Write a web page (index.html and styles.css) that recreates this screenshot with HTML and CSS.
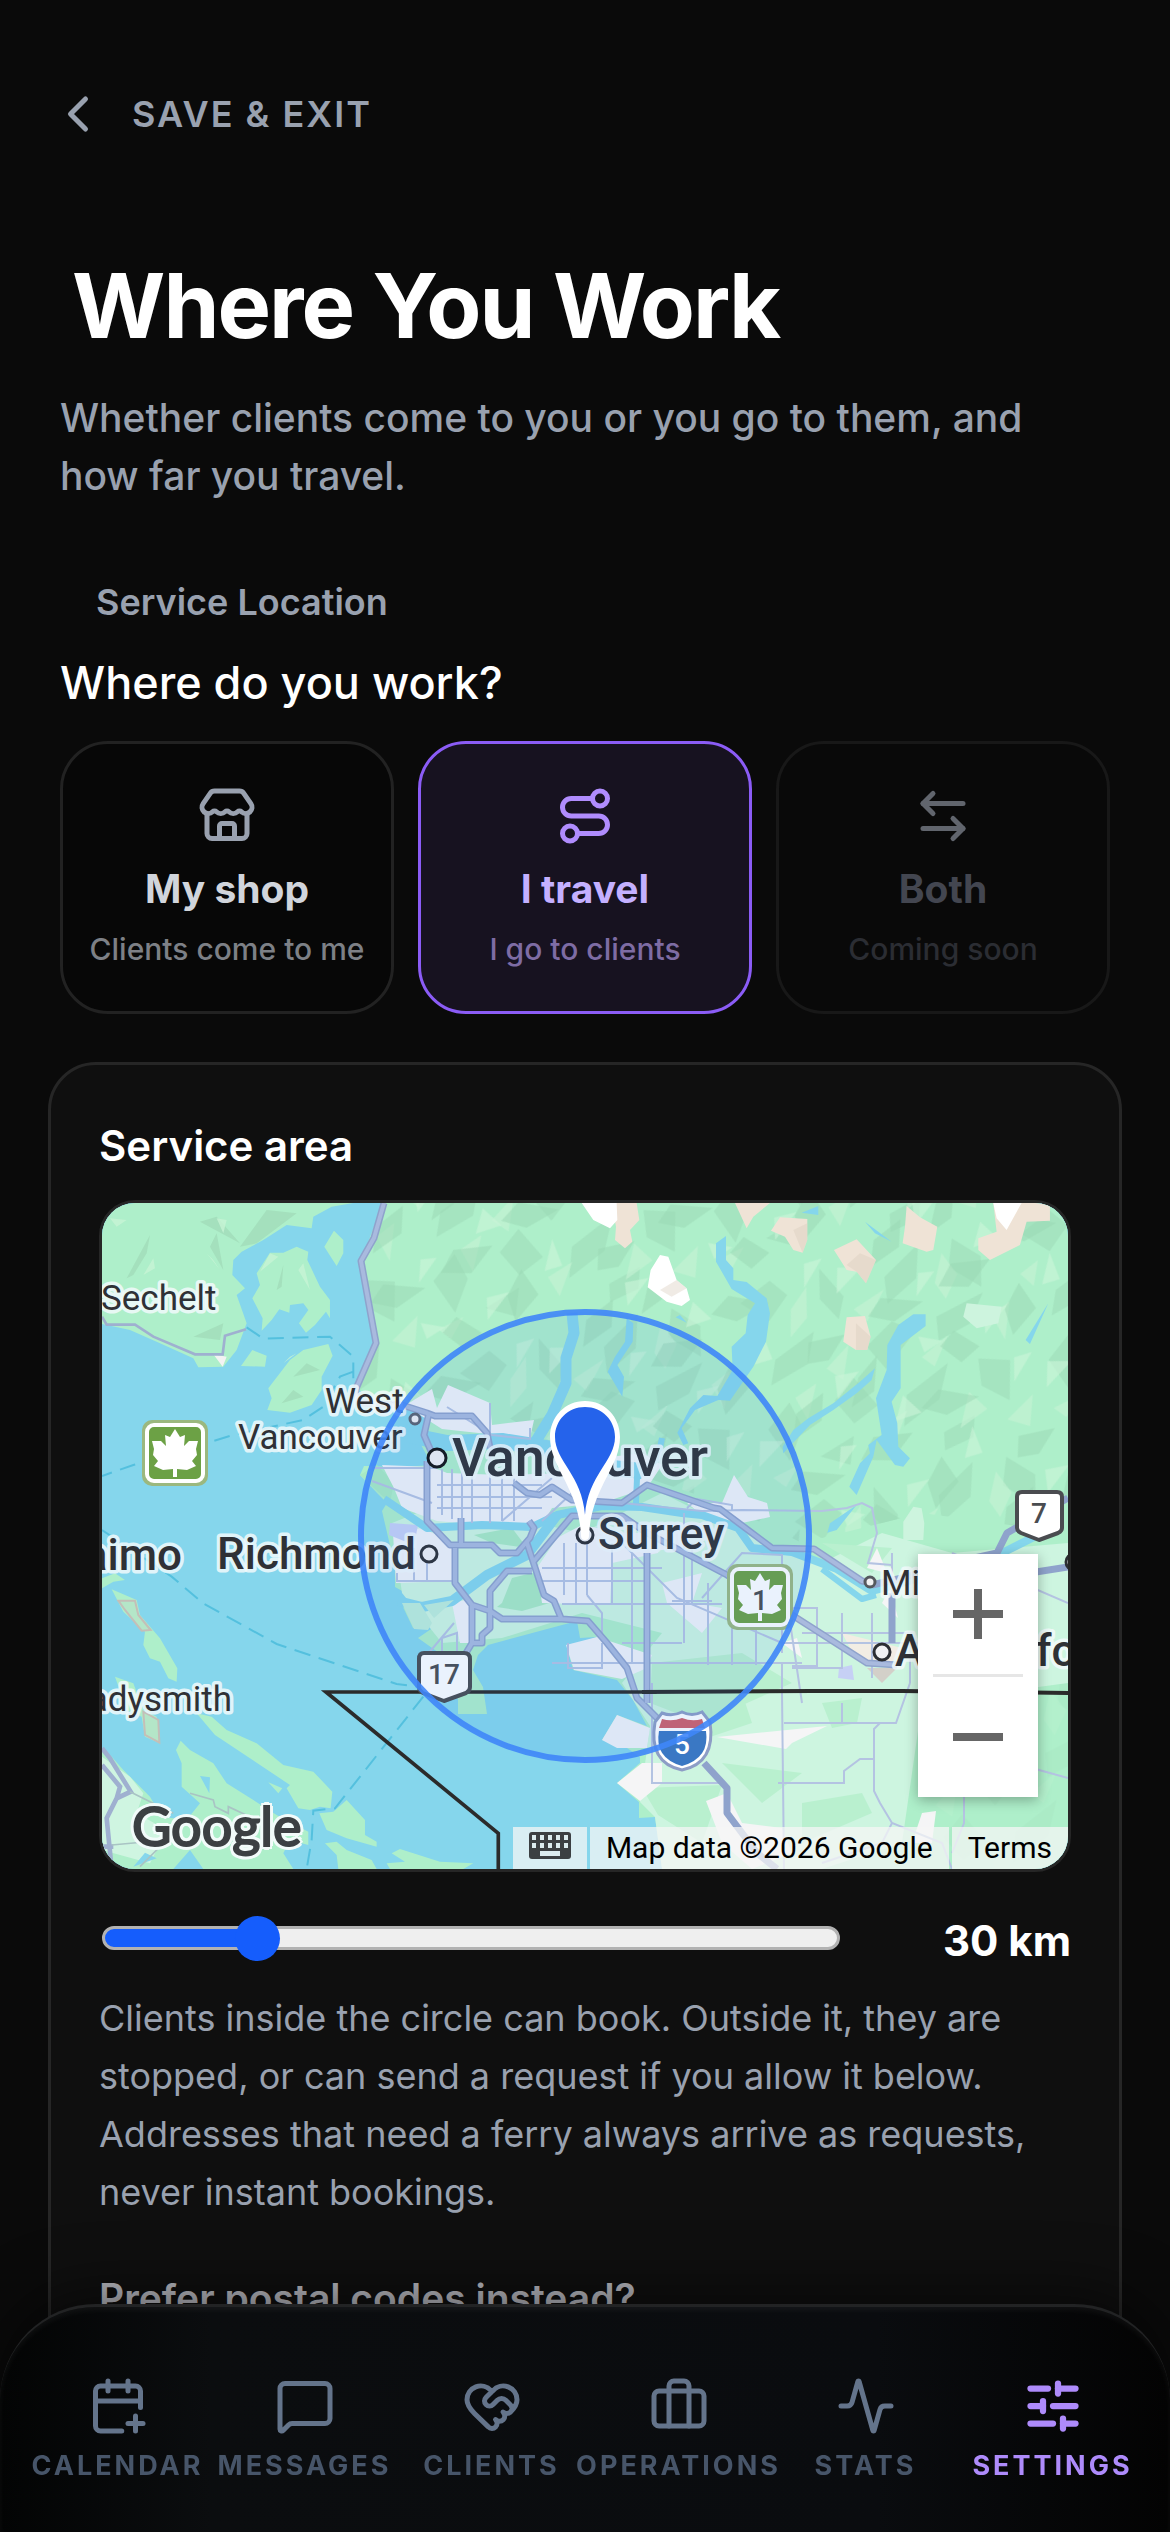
FILE: index.html
```html
<!DOCTYPE html>
<html lang="en">
<head>
<meta charset="utf-8">
<meta name="viewport" content="width=device-width, initial-scale=1">
<title>Where You Work</title>
<link rel="stylesheet" href="styles.css">
</head>
<body>
<main class="page">
  <button class="back" type="button">
    <svg class="icon" viewBox="0 0 24 24" aria-hidden="true"><path d="m15 18-6-6 6-6"/></svg>
    <span>SAVE &amp; EXIT</span>
  </button>

  <h1 class="title">Where You Work</h1>
  <p class="lead">Whether clients come to you or you go to them, and how far you travel.</p>

  <h2 class="section-label">Service Location</h2>
  <p class="question" id="question">Where do you work?</p>
  <div class="choices" role="group" aria-labelledby="question">
    <button class="choice" type="button">
      <svg class="icon" viewBox="0 0 24 24" aria-hidden="true"><path d="M15 21v-5a1 1 0 0 0-1-1h-4a1 1 0 0 0-1 1v5"/><path d="M17.774 10.31a1.12 1.12 0 0 0-1.549 0 2.5 2.5 0 0 1-3.451 0 1.12 1.12 0 0 0-1.548 0 2.5 2.5 0 0 1-3.452 0 1.12 1.12 0 0 0-1.549 0 2.5 2.5 0 0 1-3.77-3.248l2.889-4.184A2 2 0 0 1 7 2h10a2 2 0 0 1 1.653.873l2.895 4.192a2.5 2.5 0 0 1-3.774 3.244"/><path d="M4 10.95V19a2 2 0 0 0 2 2h12a2 2 0 0 0 2-2v-8.05"/></svg>
      <span class="choice-name">My shop</span>
      <span class="choice-note">Clients come to me</span>
    </button>
    <button class="choice choice-on" type="button" aria-pressed="true">
      <svg class="icon" viewBox="0 0 24 24" aria-hidden="true"><circle cx="6" cy="19" r="3"/><path d="M9 19h8.5a3.5 3.5 0 0 0 0-7h-11a3.5 3.5 0 0 1 0-7H15"/><circle cx="18" cy="5" r="3"/></svg>
      <span class="choice-name">I travel</span>
      <span class="choice-note">I go to clients</span>
    </button>
    <button class="choice choice-off" type="button" disabled>
      <svg class="icon" viewBox="0 0 24 24" aria-hidden="true"><path d="M8 3 4 7l4 4"/><path d="M4 7h16"/><path d="m16 21 4-4-4-4"/><path d="M20 17H4"/></svg>
      <span class="choice-name">Both</span>
      <span class="choice-note">Coming soon</span>
    </button>
  </div>

  <section class="card">
    <h3 class="card-title">Service area</h3>
    <div class="map">
      <svg class="map-art" viewBox="0 0 966 666" preserveAspectRatio="xMidYMid slice" role="img" aria-label="Map of Vancouver and Surrey">
        <defs>
          <pattern id="hills" width="170" height="150" patternUnits="userSpaceOnUse" patternTransform="rotate(-14) scale(1.7 1.5)">
            <g fill="#9fdcb9" opacity=".6">
              <path d="M10 18l20-10 8 12-14 14zM60 8l10 22-6 14-8-16zM96 24l24-16-6 22-20 12zM140 10l14 16-4 20-16-18zM22 60l26-12-8 20-24 8zM76 66l18-12 12 10-22 20zM120 58l30-8-12 18-20 6zM8 104l16-14 4 18-12 20zM50 96l14-12 10 22-16 8zM92 104l28-14-10 22-24 12zM138 92l18 6-6 26-14-14zM34 130l22-8-6 18zM108 134l20-6-4 14-18 4z"/>
            </g>
            <g fill="#c4f3d3" opacity=".7">
              <path d="M38 30l12-12-4 20-12 10zM74 40l20-8-14 18zM124 36l8-18 6 16-10 14zM4 44l12-6-6 16zM50 74l16-12-8 22zM106 82l18-10-12 18zM152 66l12-6-8 24zM28 88l14-6-10 22zM74 120l16-6-12 20zM128 112l8 14-18 8zM4 136l16-4-10 12zM146 136l18-12-6 20z"/>
            </g>
          </pattern>
          <pattern id="ridges" width="230" height="190" patternUnits="userSpaceOnUse" patternTransform="rotate(24)">
            <path fill="#9ad8b4" opacity=".5" d="M12 30l30-22-4 30-18 12zM80 14l12 34-14 24-6-30zM150 20l40-10-22 30-26 4zM30 100l16-30 10 26-18 30zM110 90l34-20-8 34-28 12zM180 80l26 16-10 34-18-20zM60 150l40-14-18 30-26 6zM140 150l30 4-10 22-26-6z"/>
            <path fill="#cbf5d8" opacity=".6" d="M50 50l20-14-8 34zM120 40l24 8-20 18zM196 40l20 20-14 12zM8 140l22-10-12 34zM84 112l14-8-6 30zM160 120l18-14-8 34zM110 170l24-6-12 18zM206 150l14-12-4 34z"/>
          </pattern>
          <path id="leaf" d="M0-24 5-16 10-18 9-7 14-12 23-12 21-4 22 2 17 8 21 13 12 17 2 16V24H-2V16L-12 17-21 13-17 8-22 2-21-4-23-12-14-12-9-7-10-18-5-16Z"/>
          <g id="highway">
            <rect x="-33" y="-33" width="66" height="66" rx="10" fill="#9bb87f"/>
            <rect x="-28" y="-28" width="56" height="56" rx="7" fill="#6ca145" stroke="#fff" stroke-width="4"/>
            <use href="#leaf" fill="#fff"/>
          </g>
        </defs>

        <rect width="966" height="666" fill="#85d6ec"/>

        <!-- Sunshine Coast and Howe Sound islands -->
        <g transform="translate(-12 -13) scale(.3333)">
          <g id="west-land" fill="#aeefca">
            <path d="M36 39H790L725 50 670 80 665 115 590 105 520 150 455 185 430 210 427 255 465 295 440 315 470 400 440 480 400 530 325 532 310 505 210 460 120 420 36 402Z"/>
            <path d="M540 188 580 188 620 170 655 185 652 210 690 290 720 330 720 385 708 365 675 405 648 428 627 400 655 360 640 340 600 345 598 368 568 358 545 390 515 422 518 385 487 325 510 285 500 250Z"/>
            <path d="M732 122 760 150V190L740 228 703 170ZM715 462 728 497 695 560V600L665 645 600 668 532 660 545 625 535 595 600 510 640 480ZM487 480 530 497 525 530 453 528Z"/>
          </g>
          <path d="M370 493 410 500 398 530Z" fill="#f3f3f3"/>
          <g fill="#a1dcb9" opacity=".8"><path d="M180 135 110 265 130 255 170 190ZM330 95 450 160 380 80ZM380 130 400 240 360 170ZM530 60 450 170 500 160 620 70ZM580 225 560 300 575 290ZM650 520 610 560 690 540ZM310 440 400 400 390 450ZM610 600 575 640 640 620Z"/></g>
          <g fill="#c7f4d5" opacity=".8"><path d="M190 205 160 255 195 235ZM60 85 110 90 80 110ZM350 190 390 240 370 210ZM540 190 510 245 565 200ZM380 85 400 130 410 90ZM620 490 580 520 600 500ZM640 220 660 300 625 240Z"/></g>
          <path d="M36 380 50 404H135L190 440 315 493H398L405 437 468 418" fill="none" stroke="#9fb0d0" stroke-width="8"/>
          <path d="M470 412 520 446 720 440 790 500V565M790 545 750 560 700 650 640 690 430 735 130 825 36 858" fill="none" stroke="#54c0de" stroke-width="6" stroke-dasharray="48 26"/>
        </g>

        <!-- Mainland -->
        <path d="M281 0 259 58 274 140 254 178 262 196 302 203 325 214 318 240 330 262 300 264 262 263 258 272 275 290 285 300 280 308 293 364V384L311 394 300 402 311 425 332 424 316 435 340 452 356 497V511H385L381 484 371 467 376 452 386 442 475 418 478 435 495 434 465 444 471 467 515 477 531 497 545 523 515 512 500 537 525 545 538 554V560L515 580 537 599V615L553 614 560 666H966V0Z" fill="#aeefca"/>
        <path d="M281 0 259 58 274 140 254 178 262 196 380 200 470 250 620 300 700 340 820 310 966 330V0Z" fill="url(#hills)"/>
        <path d="M281 0 259 58 274 140 254 178 262 196 380 200 470 250 620 300 700 340 820 310 966 330V0Z" fill="url(#ridges)"/>
        <path d="M820 470 966 440V666H820Z" fill="url(#hills)" opacity=".35"/>

        <!-- Lowlands -->
        <path d="M340 300 480 330 560 290 640 330 720 360 780 330 850 350 966 340V480L820 500 800 640 720 666H560L553 614 538 599 548 523 520 480 560 430 480 410 400 435 340 440 300 390 290 320Z" fill="#cdf5e0"/>
        <path d="M720 500 760 495 755 520 730 525ZM620 560 700 570 660 600ZM540 585 620 582 600 640 556 612ZM700 600 760 590 770 610 700 640ZM640 380 690 390 680 420 640 410ZM600 500 640 490 650 520 590 540ZM720 340 790 345 770 370ZM550 460 640 450 690 480 600 520 548 500Z" fill="#b9f0cf"/>
        <path d="M400 400 410 375 430 370 460 375 465 395 420 408 395 404ZM372 332 410 325 425 345 390 340ZM258 272 275 262 292 280 288 300ZM465 305 420 300 440 292Z" fill="#a8e9c3"/>

        <!-- Towns -->
        <g fill="#f1f3f8">
          <path d="M302 203 330 186 335 205 346 182 388 200 390 222 432 217 428 235 395 232 340 226 318 212Z"/>
          <path d="M280 262 330 264 345 270 400 272 470 270 500 255 540 250 560 262 545 285 500 300 450 305 440 322 380 322 335 318 300 305 292 285Z"/>
          <path d="M291 330 320 325 352 340 350 378 294 380ZM350 400 368 396 372 440 358 440ZM480 322 520 330 560 330 556 350 510 360 508 402 440 400 435 365 455 335Z"/>
          <path d="M464 442 495 434 550 452 545 465 520 476 472 467ZM515 512 548 525 545 545 515 545 500 537ZM560 380 600 370 590 400 620 405 600 430 565 400ZM545 320 600 320 580 345 530 350Z"/>
          <path d="M585 300 620 300 632 272 646 294 665 300 668 314 640 320 600 312Z"/>
        </g>
        <g fill="#f5f5f6">
          <path d="M615 534 725 523 690 540 684 546ZM515 580 540 560 560 560V580L538 598ZM604 598 625 590 640 620 680 625 690 650 650 666 620 640ZM788 385 796 415 780 400ZM775 345 785 370 765 365ZM820 610 834 608 830 640 810 640ZM680 440 695 435 700 455Z"/>
        </g>
        <path d="M740 430 800 445 790 460 755 458Z" fill="#f2ede4"/>
        <path d="M737 465 750 462 752 477 736 475ZM288 320 316 322 312 342 287 332Z" fill="#c6d0f5"/>
        <path d="M765 465 795 465 780 480Z" fill="#d3d0c9"/>

        <!-- Peaks -->
        <g transform="translate(478 -13) scale(.3333)">
          <path d="M95 39H170L178 90 150 120 157 155 135 175 105 150 108 110ZM465 39H570L520 80 500 115ZM600 82 682 87V150L668 188 640 180 615 140 573 122ZM830 148 888 210 858 280 830 245 800 240 762 180ZM980 48 1020 82 1072 110 1060 180 1040 185 968 160 975 110ZM1240 39H1410V92L1340 95 1320 165 1230 210 1195 180V145L1250 125ZM800 382 855 378 872 440 862 480H828L790 455Z" fill="#efe3d6"/>
          <path d="M5 39H110L112 90 90 115 40 90ZM240 195 265 200 290 270 320 295 330 330 305 348 260 335 203 292 212 240ZM1240 39H1325L1280 120 1250 85Z" fill="#fff"/>
          <path d="M640 120 682 100V150L668 188ZM800 225 840 190 888 210 858 280 830 245ZM828 400 872 440 862 480H828ZM240 300 290 270 320 295 275 320Z" fill="#d9cdbf" opacity=".4"/>
          <path d="M1160 340 1265 350 1255 400 1190 415 1150 380ZM1000 950 1025 955 1033 1000 1030 1050H970V995Z" fill="#cdf4de"/>
          <g fill="#85d6ec">
            <path d="M438 138V210L460 235V270L500 276 560 325 570 370 558 455 520 530 450 632 415 630 345 660 305 715 325 760 310 765 292 728 330 655 370 615 412 618 458 540 455 470 497 430 503 375 525 340 455 297 408 215V160Z"/>
            <path d="M1000 373H1037V408L962 465V595L935 635 952 700 955 770 990 805 970 830 945 825 890 750 880 800 830 915 808 890 840 820 870 790 865 765 905 735 888 625 920 540 922 465 955 405Z"/>
            <path d="M885 535 875 570 830 610 760 660 690 705 610 790 608 770 640 720 685 685 760 640 840 575ZM140 385 160 400 158 455 112 525 132 560 127 620 83 545 105 500 135 455ZM1405 340 1350 462 1337 450ZM715 48V75L665 68ZM855 95 935 155 885 130ZM300 375 320 398 287 382ZM830 945 770 1020 742 1028 750 1000Z"/>
          </g>
        </g>

        <!-- Inlets and rivers -->
        <g fill="none" stroke="#85d6ec" stroke-linejoin="round">
          <path d="M470 110 472 130 464 155 464 180 450 212 434 238" stroke-width="11"/>
          <path d="M306 232 345 240 400 238 450 246 480 262 540 268" stroke-width="16"/>
          <path d="M282 296 325 325 380 322 430 324 455 312 500 303 540 304 580 310 600 312 636 325 650 345 690 349 735 366 770 388 800 380 900 350 940 330" stroke-width="8"/>
          <path d="M455 312 425 352 385 372 350 398 320 404 296 398" stroke-width="10"/>
          <path d="M534 300 535 275 556 255 560 235M720 366 760 396 774 392" stroke-width="6"/>
        </g>
        <path d="M300 400 318 400 330 420 326 427 312 426ZM322 402 352 397 332 415Z" fill="#bdeedb"/>

        <!-- Local streets -->
        <g fill="none" stroke="#b4c3e2" stroke-width="2">
          <path d="M340 266V312M350 266V316M360 268V318M370 268V320M388 200V320M400 275V318M412 275V318M335 282H440M335 294H450M335 305H440M270 265H335M270 278 330 300M295 370V378H350M312 345V378M325 345V378M345 204 390 232 428 236V225M400 318 450 275M440 318 470 290"/>
          <path d="M485 335V392M510 340V400M462 340V392M474 340V400M440 365H560M440 378H548M460 401H620M485 392 500 410V430M510 330 575 395 680 440H800M582 310V440M590 340V400M520 440H580M450 460H700M606 380V462M630 380V462M654 380V462M570 398H610M600 395 640 350 680 352V450M680 365 700 500M530 350V460M690 463H715V405H640M740 410V465H690M770 410V475M720 440H850M700 430H810M790 350V425"/>
          <path d="M550 480V580H620M680 460V490L682 666M682 520H794L808 480M676 580H742V568L758 556H772V526L778 520M772 556V588L778 600 790 620 840 640 850 666M790 620 780 640 720 660M740 500V520M808 480V440M862 594V620L850 650M900 540 930 565 966 575"/>
          <path d="M500 298 600 308 640 307 720 308 745 305 760 300 770 305 775 330 766 360 790 362M585 305 595 296 630 302V308M340 470V435L355 430V450M850 350 966 400"/>
          <path d="M466 440V465H500V440M325 452 352 420" />
        </g>

        <!-- Highways -->
        <g fill="none" stroke="#8fa3cc" stroke-width="7" stroke-linejoin="round">
          <path id="hw" d="M282 0 272 35 259 58 274 140 253 188 257 200 300 202 325 210 333 213 370 213 385 230 388 245M327 210 322 232 332 255M325 258V318L348 342H390L398 350H415L428 335 432 325 427 318M359 315V342M353 345V380L370 402 388 408 400 416H460L486 418 505 440 525 465 535 495 560 520M425 340 442 392 452 398 459 415M370 402V440L358 460M388 408V425L380 432V440H370M388 408V388L405 368H430M432 358 470 313H520L545 330 625 372 690 412 765 460 795 462M412 280 425 290 438 292 450 284 470 297 520 300 545 282 612 305 618 306 650 330 670 345 712 346 760 378 770 380M545 350V500M600 665"/>
          <path d="M602 560 625 585V610L655 650 675 666M790 390V440M770 382 800 375 850 360 895 350 905 330 966 295M915 372 966 364"/>
        </g>
        <g fill="none" stroke="#a9bade" stroke-width="4" stroke-linejoin="round"><use href="#hw" stroke="#a9bade"/></g>

        <!-- Vancouver Island and the Gulf Islands -->
        <g transform="translate(-12 327) scale(.3333)">
          <path d="M36 145 75 130 105 150 70 155 36 175ZM65 178 140 210 150 255 210 325 262 415 260 455 235 445 210 395 180 385 160 345 165 305 100 245ZM75 440 130 460 160 540 200 560 210 640 165 620 155 560 110 540ZM320 550 365 560 410 600 500 640 580 705 670 725 727 785 722 835 690 830 660 840 625 835 590 775 600 765 480 685 375 615ZM272 632 300 660 370 700 410 760 490 810 560 855 655 905 655 945 600 930 580 970 610 1017H340L300 960 250 1017H36V655L65 680 100 720 130 750 180 800 215 860 290 870 330 820 275 770 275 700 258 660ZM770 810 825 870V915L860 935V950L770 925 710 900 688 850 730 845ZM705 940 740 935 770 960 845 990 860 1017H745L740 975ZM930 957 1050 995 1150 1000 1120 1017H900L890 1000 945 995 905 970ZM535 757 577 775 565 790Z" fill="#aeefca"/>
          <path d="M36 680 120 740 160 790 140 850 230 900 180 1000 36 960Z" fill="#cff5e1"/>
          <path d="M330 738 360 742 358 790ZM130 1010 165 968 200 985Z" fill="#85d6ec"/>
          <path d="M85 212H135L145 255 182 300 155 302 105 240ZM160 545 205 570 208 638 165 615Z" fill="#b4e6c8" stroke="#c4bfb8" stroke-width="6"/>
          <path d="M36 655 60 685 122 785 80 805 50 865 65 1017M36 705 90 770 80 805M36 950H70" fill="none" stroke="#9fb0d0" stroke-width="14"/>
          <path d="M120 785 250 850M300 790 370 810 375 830 415 850V830L500 870M65 945 230 930 150 1010" fill="none" stroke="#a9c4c4" stroke-width="5"/>
          <path d="M36 0 245 140 340 220 560 342 920 462 985 470M1000 500 735 835 670 842 665 930 650 1017" fill="none" stroke="#54c0de" stroke-width="6" stroke-dasharray="50 26"/>
          <path d="M1225 1017V910L708 486H1700" fill="none" stroke="#2b2b2b" stroke-width="11"/>
        </g>
        <path d="M540 489 710 488 800 488 966 490" fill="none" stroke="#2b2b2b" stroke-width="4"/>

        <!-- Place names -->
        <g class="places">
          <text x="-1" y="107" class="town">Sechelt</text>
          <text x="223" y="210" class="town">West</text>
          <text x="136" y="246" class="town">Vancouver</text>
          <text x="130" y="508" class="town" text-anchor="end">Ladysmith</text>
          <text x="779" y="392" class="town">Mission</text>
          <text x="80" y="367" class="city" text-anchor="end">Nanaimo</text>
          <text x="115" y="366" class="city">Richmond</text>
          <text x="496" y="346" class="city">Surrey</text>
          <text x="793" y="463" class="city">Abbotsford</text>
          <text x="350" y="273" class="metro">Vancouver</text>
        </g>
        <g fill="#f1f1f3" stroke="#2c2e33" stroke-width="3">
          <circle cx="313" cy="216" r="5" stroke="#5c6370"/>
          <circle cx="335" cy="255" r="9" stroke="#111"/>
          <circle cx="327" cy="351" r="8"/>
          <circle cx="483" cy="332" r="8"/>
          <circle cx="768" cy="379" r="5" stroke="#55585e"/>
          <circle cx="780" cy="449" r="8"/>
          <circle cx="972" cy="359" r="8"/>
        </g>

        <!-- Route shields -->
        <use href="#highway" x="73" y="250"/>
        <use href="#highway" x="658" y="394"/>
        <text x="658" y="407" class="route">1</text>
        <g fill="#fff" stroke="#4a4c50" stroke-width="4" stroke-linejoin="round">
          <path d="M322 450H362Q368 450 368 456V484Q368 488 364 490L342 498 321 490Q317 488 317 484V456Q317 450 322 450Z"/>
          <path d="M920 289H955Q960 289 960 294V325Q960 328 956 330L937 337 919 330Q915 328 915 325V294Q915 289 920 289Z"/>
        </g>
        <text x="342" y="481" class="route">17</text>
        <text x="937" y="320" class="route">7</text>
        <path d="M560 510Q570 514 580 509Q590 514 600 509L608 519Q614 560 580 567Q546 560 553 519Z" fill="#fff" stroke="#8d9dc6" stroke-width="3"/>
        <path d="M560 516Q570 519 580 515Q590 519 600 516L603 525H557Z" fill="#d0606a"/>
        <path d="M557 528H604Q608 555 580 563Q552 555 557 528Z" fill="#3a78c4"/>
        <text x="580" y="551" class="route route-light">5</text>

        <circle cx="483" cy="333" r="224" fill="#2f7cf0" fill-opacity=".1" stroke="#3f86f8" stroke-opacity=".9" stroke-width="6"/>
        <path d="M483 198C463 198 448 214 448 234C448 265 477 285 479 333A4 4 0 0 0 487 333C489 285 518 265 518 234C518 214 503 198 483 198Z" fill="#fff"/>
        <path d="M483 204C466 204 453 217 453 234C453 258 480 272 483 312C486 272 513 258 513 234C513 217 500 204 483 204Z" fill="#2563eb"/>
      </svg>
      <a class="map-logo" href="#">Google</a>
      <div class="map-zoom">
        <button type="button" aria-label="Zoom in"><svg viewBox="0 0 50 50" aria-hidden="true"><path d="M21 0h8v21h21v8H29v21h-8V29H0v-8h21z"/></svg></button>
        <button type="button" aria-label="Zoom out"><svg viewBox="0 0 50 50" aria-hidden="true"><path d="M0 21h50v8H0z"/></svg></button>
      </div>
      <div class="map-legal">
        <button type="button" class="map-keys" aria-label="Keyboard shortcuts"><svg viewBox="0 0 42 27" aria-hidden="true"><rect width="42" height="27" rx="3" fill="#3c4043"/><path d="M3 3h4v5H3zm8 0h4v5h-4zm8 0h4v5h-4zm8 0h4v5h-4zm8 0h4v5h-4zM3 11h4v5H3zm8 0h4v5h-4zm8 0h4v5h-4zm8 0h4v5h-4zm8 0h4v5h-4zM11 19h20v5H11z" fill="#dcecef"/></svg></button>
        <span>Map data ©2026 Google</span>
        <a href="#">Terms</a>
      </div>
    </div>

    <div class="radius">
      <input class="range" type="range" id="radius" min="2" max="150" value="30" aria-label="Travel radius">
      <output class="radius-value" for="radius">30 km</output>
    </div>
    <p class="help">Clients inside the circle can book. Outside it, they are stopped, or can send a request if you allow it below. Addresses that need a ferry always arrive as requests, never instant bookings.</p>
    <h3 class="postal">Prefer postal codes instead?</h3>
  </section>
</main>

<nav class="tabs" aria-label="Main">
  <a class="tab" href="#"><svg class="icon" viewBox="0 0 24 24" aria-hidden="true"><path d="M16 19h6"/><path d="M16 2v4"/><path d="M19 16v6"/><path d="M21 12.598V6a2 2 0 0 0-2-2H5a2 2 0 0 0-2 2v14a2 2 0 0 0 2 2h8.5"/><path d="M3 10h18"/><path d="M8 2v4"/></svg><span>CALENDAR</span></a>
  <a class="tab" href="#"><svg class="icon" viewBox="0 0 24 24" aria-hidden="true"><path d="M22 17a2 2 0 0 1-2 2H6.828a2 2 0 0 0-1.414.586l-2.202 2.202A.71.71 0 0 1 2 21.286V5a2 2 0 0 1 2-2h16a2 2 0 0 1 2 2z"/></svg><span>MESSAGES</span></a>
  <a class="tab" href="#"><svg class="icon" viewBox="0 0 24 24" aria-hidden="true"><path d="M19.414 14.414C21 12.828 22 11.5 22 9.5a5.5 5.5 0 0 0-9.591-3.676.6.6 0 0 1-.818.001A5.5 5.5 0 0 0 2 9.5c0 2.3 1.5 4 3 5.5l5.535 5.362a2 2 0 0 0 2.879.052 2.12 2.12 0 0 0-.004-3 2.124 2.124 0 1 0 3-3 2.124 2.124 0 0 0 3.004 0 2 2 0 0 0 0-2.828l-1.881-1.882a2.41 2.41 0 0 0-3.409 0l-1.71 1.71a2 2 0 0 1-2.828 0 2 2 0 0 1 0-2.828l2.823-2.762"/></svg><span>CLIENTS</span></a>
  <a class="tab" href="#"><svg class="icon" viewBox="0 0 24 24" aria-hidden="true"><path d="M16 20V4a2 2 0 0 0-2-2h-4a2 2 0 0 0-2 2v16"/><rect x="2" y="6" width="20" height="14" rx="2"/></svg><span>OPERATIONS</span></a>
  <a class="tab" href="#"><svg class="icon" viewBox="0 0 24 24" aria-hidden="true"><path d="M22 12h-2.48a2 2 0 0 0-1.93 1.46l-2.35 8.36a.25.25 0 0 1-.48 0L9.24 2.18a.25.25 0 0 0-.48 0l-2.35 8.36A2 2 0 0 1 4.49 12H2"/></svg><span>STATS</span></a>
  <a class="tab tab-on" href="#" aria-current="page"><svg class="icon" viewBox="0 0 24 24" aria-hidden="true"><path d="M10 5H3"/><path d="M12 19H3"/><path d="M14 3v4"/><path d="M16 17v4"/><path d="M21 12h-9"/><path d="M21 19h-5"/><path d="M21 5h-7"/><path d="M8 10v4"/><path d="M8 12H3"/></svg><span>SETTINGS</span></a>
</nav>
</body>
</html>
```
FILE: styles.css
```css
* {
  box-sizing: border-box;
}

body {
  margin: 0;
  background: #0a0a0a;
  color: #fff;
  font-family: Inter, "Liberation Sans", sans-serif;
}

h1, h2, h3, p {
  margin: 0;
}

button {
  margin: 0;
  padding: 0;
  border: 0;
  background: none;
  color: inherit;
  font: inherit;
  cursor: pointer;
}

a {
  color: inherit;
  text-decoration: none;
}

.icon {
  display: block;
  width: 60px;
  height: 60px;
  flex: none;
  fill: none;
  stroke: currentColor;
  stroke-width: 2;
  stroke-linecap: round;
  stroke-linejoin: round;
}

.page {
  padding: 84px 48px 120px;
}

/* Heading */
.back {
  display: flex;
  align-items: center;
  gap: 24px;
  color: #99a1af;
  font-size: 36px;
  font-weight: 600;
  line-height: 60px;
  letter-spacing: 2px;
}

.title {
  margin: 112px 24px 0;
  font-size: 90px;
  font-weight: 700;
  line-height: 100px;
  letter-spacing: -2px;
}

.lead {
  margin: 33px 12px 0;
  color: #99a1af;
  font-size: 39px;
  font-weight: 500;
  line-height: 58px;
}

.section-label {
  margin: 70px 48px 0;
  color: #99a1af;
  font-size: 36px;
  font-weight: 600;
  line-height: 54px;
}

.question {
  margin: 21px 12px 0;
  font-size: 45px;
  font-weight: 500;
  line-height: 66px;
}

/* Location choices */
.choices {
  display: grid;
  grid-template-columns: repeat(3, 1fr);
  gap: 24px;
  margin: 25px 12px 0;
}

.choice {
  display: flex;
  flex-direction: column;
  align-items: center;
  padding: 42px 12px 39px;
  border: 3px solid #222;
  border-radius: 48px;
  background: #070707;
  color: #99a1af;
}

.choice-name {
  margin-top: 14px;
  color: #d1d5dc;
  font-size: 39px;
  font-weight: 700;
  line-height: 58px;
}

.choice-note {
  margin-top: 8px;
  color: #7d8086;
  font-size: 30px;
  font-weight: 500;
  line-height: 46px;
  white-space: nowrap;
}

.choice-on {
  border-color: #8b5cf6;
  background: #171220;
  color: #b08cfd;
}

.choice-on .choice-name {
  color: #c4b0ff;
}

.choice-on .choice-note {
  color: #7e6ca4;
}

.choice-off {
  border-color: #181818;
  background: #090909;
  color: #61656d;
  cursor: default;
}

.choice-off .choice-name {
  color: #434650;
}

.choice-off .choice-note {
  color: #2b2d33;
}

/* Service area card */
.card {
  margin-top: 48px;
  padding: 48px;
  border: 3px solid #262626;
  border-radius: 48px;
  background: #0f0f0f;
}

.card-title {
  font-size: 42px;
  font-weight: 600;
  line-height: 66px;
}

.map {
  position: relative;
  height: 672px;
  margin-top: 21px;
  overflow: hidden;
  border: 3px solid #262626;
  border-radius: 36px;
  background: #85d6ec;
  font-family: Roboto, "Liberation Sans", sans-serif;
}

.map-art {
  display: block;
  width: 100%;
  height: 100%;
}

.places {
  fill: #2f3136;
  stroke: #f2fafc;
  stroke-opacity: .85;
  stroke-width: 7px;
  stroke-linejoin: round;
  paint-order: stroke;
}

.town {
  font-size: 35px;
}

.city {
  font-size: 44px;
  font-weight: 500;
}

.metro {
  font-size: 54px;
  font-weight: 500;
}

.route {
  fill: #4a4c50;
  font-size: 28px;
  font-weight: 500;
  text-anchor: middle;
}

.route-light {
  fill: #fff;
}

.map-logo {
  position: absolute;
  bottom: 10px;
  left: 30px;
  color: #3c4043;
  font-family: Lato, sans-serif;
  font-size: 54px;
  font-weight: 400;
  line-height: 66px;
  -webkit-text-stroke: 2px #3c4043;
  text-shadow: 4px 0 #f2fbfa, -4px 0 #f2fbfa, 0 4px #f2fbfa, 0 -4px #f2fbfa,
    3px 3px #f2fbfa, -3px 3px #f2fbfa, 3px -3px #f2fbfa, -3px -3px #f2fbfa;
}

.map-zoom {
  position: absolute;
  right: 30px;
  bottom: 72px;
  width: 120px;
  background: #fff;
  box-shadow: 0 3px 12px rgba(0, 0, 0, .3);
}

.map-zoom button {
  display: grid;
  place-items: center;
  width: 120px;
  height: 120px;
}

.map-zoom button + button::before {
  content: "";
  position: absolute;
  top: 120px;
  width: 90px;
  height: 3px;
  background: #e6e6e6;
}

.map-zoom button + button {
  margin-top: 3px;
}

.map-zoom svg {
  width: 50px;
  height: 50px;
  fill: #666;
}

.map-legal {
  position: absolute;
  right: 0;
  bottom: 0;
  display: flex;
  gap: 3px;
  color: #000;
  font-size: 30px;
  line-height: 42px;
  white-space: nowrap;
}

.map-legal > * {
  padding: 0 16px;
  background: rgba(245, 245, 245, .75);
}

.map-keys svg {
  display: block;
  width: 42px;
  height: 27px;
  margin-bottom: 6px;
}

/* Radius */
.radius {
  display: flex;
  align-items: flex-start;
  gap: 36px;
  margin-top: 39px;
}

.range {
  flex: 1;
  min-width: 0;
  height: 54px;
  margin: 0 3px;
  background: none;
  appearance: none;
}

.range::-webkit-slider-runnable-track {
  height: 24px;
  border: 3px solid #b2b2b2;
  border-radius: 12px;
  background: linear-gradient(to right, #155dfc 21%, #efefef 21%);
}

.range::-webkit-slider-thumb {
  width: 45px;
  height: 45px;
  margin-top: -13px;
  border-radius: 50%;
  background: #155dfc;
  appearance: none;
}

.radius-value {
  width: 192px;
  font-size: 42px;
  font-weight: 700;
  line-height: 60px;
  text-align: right;
}

.help {
  margin-top: 18px;
  color: #99a1af;
  font-size: 36px;
  line-height: 58px;
}

.postal {
  margin-top: 48px;
  color: #bcbdc4;
  font-size: 39px;
  font-weight: 600;
  line-height: 58px;
}

/* Bottom tabs */
.tabs {
  position: fixed;
  right: 0;
  bottom: 0;
  left: 0;
  display: grid;
  grid-template-columns: repeat(6, minmax(0, 1fr));
  padding: 69px 24px 48px;
  border-top: 3px solid #222324;
  border-radius: 96px 96px 0 0;
  background: linear-gradient(to right, #030404, #0b0d0f 18%, #0a0c0f 75%, #030303);
  box-shadow: 0 -12px 60px rgba(0, 0, 0, .5), inset 0 3px 6px rgba(255, 255, 255, .05);
}

.tab {
  display: flex;
  flex-direction: column;
  align-items: center;
  gap: 12px;
  color: #64748b;
  font-size: 27px;
  font-weight: 700;
  line-height: 36px;
  letter-spacing: 3px;
}

.tab span {
  color: #475569;
}

.tab-on,
.tab-on span {
  color: #ae8bfb;
}

.tab-on .icon {
  stroke-width: 2.5;
}
```
